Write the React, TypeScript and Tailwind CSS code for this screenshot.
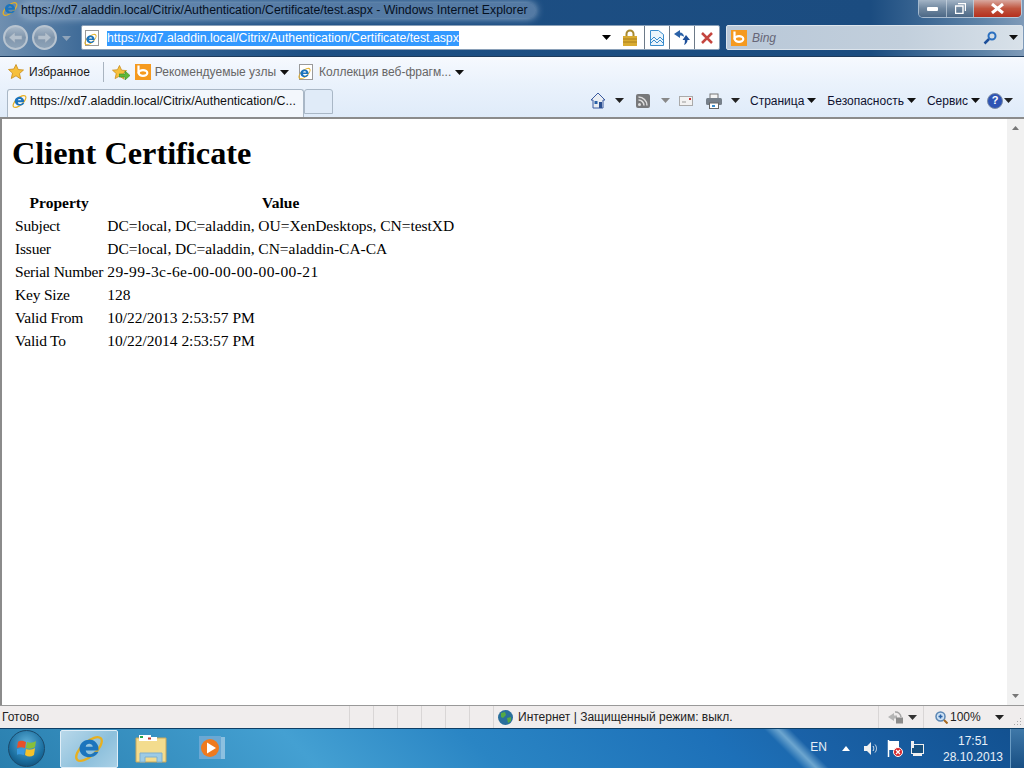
import React from "react";

const rows = [
  ["Subject", "DC=local, DC=aladdin, OU=XenDesktops, CN=testXD"],
  ["Issuer", "DC=local, DC=aladdin, CN=aladdin-CA-CA"],
  ["Serial Number", "29-99-3c-6e-00-00-00-00-00-21"],
  ["Key Size", "128"],
  ["Valid From", "10/22/2013 2:53:57 PM"],
  ["Valid To", "10/22/2014 2:53:57 PM"],
];

// small black dropdown triangle
const Caret = ({ className = "" }: { className?: string }) => (
  <svg width="9" height="5" viewBox="0 0 9 5" className={`shrink-0 ${className}`}>
    <path d="M0 0h9L4.5 5z" fill="currentColor" />
  </svg>
);

const IeLogo = ({ size = 16 }: { size?: number }) => (
  <svg width={size} height={size} viewBox="0 0 32 32" className="shrink-0">
    <ellipse cx="16" cy="16" rx="17" ry="7.500" transform="rotate(-42 16 16)" fill="none" stroke="#e8b020" strokeWidth="2.500" />
    <path d="M16 6a10 10 0 0 1 10 11.500H12.500c.3 4.500 6.500 5.500 9.500 1.500h4c-3 8-18 8-20-2C5 11 10 6 16 6zM12.500 13.500h7.500c-.5-4-7-4-7.500 0z" fill="#1c74bd" fillRule="evenodd" />
  </svg>
);

const PageIe = () => (
  <span className="relative flex h-[16px] w-[14px] shrink-0 border border-[#9a9a9a] bg-white">
    <span className="absolute -left-[2px] top-[2px]">
      <IeLogo size={13} />
    </span>
  </span>
);

const BingIcon = ({ size = 16 }: { size?: number }) => (
  <svg width={size} height={size} viewBox="0 0 16 16" className="shrink-0">
    <rect width="16" height="16" fill="#f59a1f" />
    <path d="M3.500 1.500v8" stroke="#fff" strokeWidth="2.200" />
    <ellipse cx="8" cy="9" rx="4.300" ry="2.800" fill="none" stroke="#fff" strokeWidth="2.200" />
  </svg>
);

const Star = ({ size = 16 }: { size?: number }) => (
  <svg width={size} height={size} viewBox="0 0 16 16" className="shrink-0">
    <path d="M8 .5l2.200 5 5.300.500-4 3.600 1.200 5.400L8 11.800 3.300 14.500l1.200-5.400-4-3.600 5.300-.5z" fill="#f6c03c" stroke="#c88a18" strokeWidth=".8" />
  </svg>
);

const NavButton = ({ forward }: { forward?: boolean }) => (
  <div className="flex h-[25px] w-[25px] items-center justify-center rounded-full border-2 border-[#b8c4d0] bg-[linear-gradient(#a8b8c8,#7f95ac_50%,#8ea3b8)]">
    <svg width="15" height="13" viewBox="0 0 15 13" className={forward ? "rotate-180" : ""}>
      <path d="M7 1L1 6.500 7 12V8.500h7v-4H7z" fill="#b4c0cc" stroke="#8fa0b2" strokeWidth=".6" />
    </svg>
  </div>
);

const Cmd = ({ label }: { label: string }) => (
  <div className="flex items-center text-[#0f1230]">
    <span className="text-[12px] leading-none">{label}</span>
    <Caret className="ml-[3px] text-[#111]" />
  </div>
);

export default function App() {
  return (
    <div className="flex h-[768px] w-[1024px] flex-col overflow-hidden bg-white font-['Liberation_Sans',sans-serif] text-[12px]">
      {/* title bar and address row */}
      <div className="h-[56px] shrink-0 bg-[linear-gradient(90deg,#6f8fb0_0%,#3f6b98_8%,#1d4f84_30%,#1b4c80_85%,#5f84a8_96%,#7f9ab8_100%)]">
        <div className="flex h-[25px] items-start">
          <div className="ml-[2px] mt-[1px]">
            <IeLogo size={16} />
          </div>
          <span className="ml-[3px] mt-[3px] rounded-[8px] bg-[#a9bfd6]/40 pr-[8px] text-[12.27px] leading-[15px] text-[#05101f] shadow-[0_0_8px_#a9bfd6]">
            https://xd7.aladdin.local/Citrix/Authentication/Certificate/test.aspx - Windows Internet Explorer
          </span>
          <div className="ml-auto mr-[2px] flex h-[18px] overflow-hidden rounded-b-[5px] border border-t-0 border-[#d5dfe9]/70">
            <div className="flex w-[28px] items-center justify-center border-r border-[#d5dfe9]/60 bg-[linear-gradient(#a3b4c6,#6f879f_50%,#4c6886)]">
              <div className="h-[4px] w-[11px] rounded-[1px] bg-white" />
            </div>
            <div className="flex w-[27px] items-center justify-center border-r border-[#d5dfe9]/60 bg-[linear-gradient(#a3b4c6,#6f879f_50%,#4c6886)]">
              <svg width="11" height="11" viewBox="0 0 11 11">
                <path d="M3 .5h7.500V8M.5 3h7.500v7.500H.5z" fill="none" stroke="#fff" strokeWidth="1.400" />
              </svg>
            </div>
            <div className="flex w-[47px] items-center justify-center bg-[linear-gradient(#d9a9a0,#c0553f_50%,#b52f1d)]">
              <svg width="15" height="11" viewBox="0 0 15 11">
                <path d="M2 1l11 9M13 1L2 10" stroke="#fff" strokeWidth="3" />
              </svg>
            </div>
          </div>
        </div>
        <div className="flex h-[31px] items-start">
          <div className="ml-[3px] flex gap-[4px]">
            <NavButton />
            <NavButton forward />
          </div>
          <Caret className="ml-[5px] mt-[11px] text-[#8fa4ba]" />
          <div className="ml-[10px] flex h-[25px] w-[639px] items-stretch rounded-[2px] border border-[#8aa0b8] bg-white">
            <div className="ml-[3px] flex items-center">
              <PageIe />
            </div>
            <div className="ml-[8px] flex items-center">
              <span className="mt-[1px] bg-[#3399ff] text-[12.27px] leading-[15px] text-white">https://xd7.aladdin.local/Citrix/Authentication/Certificate/test.aspx</span>
            </div>
            <div className="ml-auto flex items-center">
              <Caret className="mr-[12px] text-black" />
              <svg width="14" height="17" viewBox="0 0 14 17" className="mr-[7px]">
                <path d="M3.500 8V5a3.500 3.500 0 0 1 7 0v3" fill="none" stroke="#a88a30" strokeWidth="2" />
                <rect y="7" width="14" height="10" fill="#d9ab32" />
                <path d="M0 10h14M0 13h14" stroke="#a87f1c" />
              </svg>
            </div>
            <div className="flex w-[25px] items-center justify-center border-l border-[#6d7a88]">
              <svg width="14" height="16" viewBox="0 0 14 16">
                <path d="M.5.5h8l5 4v11H.5z" fill="#eaf4fb" stroke="#3a8ccc" />
                <path d="M1 10l3-3 3 3 3-3 3 3M1 13l3-3 3 3 3-3 3 3" fill="none" stroke="#3a8ccc" />
              </svg>
            </div>
            <div className="flex w-[25px] items-center justify-center border-l border-[#6d7a88]">
              <svg width="16" height="15" viewBox="0 0 16 15">
                <path d="M6 0L0 4l6 4V5.500c2 0 3 .5 4 1.500 0-3-2-4.500-4-4.500z" fill="#2b62a8" />
                <path d="M12 5l4 5h-2.500c0 2.500-1.500 4-3.500 5 .8-1.500 1-3 .8-5H8.500z" fill="#1d4f9a" />
              </svg>
            </div>
            <div className="flex w-[25px] items-center justify-center border-l border-[#6d7a88]">
              <svg width="12" height="12" viewBox="0 0 12 12">
                <path d="M1 1l10 10M11 1L1 11" stroke="#c4453f" strokeWidth="2.500" />
              </svg>
            </div>
          </div>
          <div className="ml-[6px] flex h-[25px] w-[297px] items-center rounded-[2px] border border-[#dce4ec] bg-[linear-gradient(90deg,#b9c8d8,#c2cfdc_60%,#d8e1e9)]">
            <div className="ml-[4px]">
              <BingIcon />
            </div>
            <span className="ml-[5px] italic text-[#667]">Bing</span>
            <svg width="14" height="14" viewBox="0 0 14 14" className="ml-auto mr-[12px]">
              <circle cx="9" cy="5" r="3.500" fill="none" stroke="#2a6fc0" strokeWidth="2" />
              <path d="M6 8l-4.500 4.500" stroke="#1d4f9a" strokeWidth="2.500" />
            </svg>
            <Caret className="mr-[4px] text-[#111]" />
          </div>
        </div>
      </div>

      {/* favourites + tab rows */}
      <div className="h-[61px] shrink-0 border-t border-[#1d3a5c] bg-[linear-gradient(#f6f9fe,#eaf2fc_45%,#dfebf9)]">
        <div className="flex h-[30px] items-center pl-[8px]">
          <Star />
          <span className="ml-[5px] text-[#1a1a1a]">Избранное</span>
          <div className="ml-[13px] h-[20px] w-px bg-[#a9b4c0]" />
          <div className="relative ml-[8px]">
            <Star size={15} />
            <svg width="11" height="9" viewBox="0 0 11 9" className="absolute -right-[3px] bottom-0">
              <path d="M0 3h6V0l5 4.500L6 9V6H0z" fill="#5fb83a" stroke="#3d8a24" strokeWidth=".6" />
            </svg>
          </div>
          <div className="ml-[8px]">
            <BingIcon />
          </div>
          <span className="ml-[4px] text-[#666]">Рекомендуемые узлы</span>
          <Caret className="ml-[4px] text-[#111]" />
          <div className="ml-[10px]">
            <PageIe />
          </div>
          <span className="ml-[6px] text-[#666]">Коллекция веб-фрагм...</span>
          <Caret className="ml-[4px] text-[#111]" />
        </div>
        <div className="flex h-[30px] items-end pl-[7px]">
          <div className="flex h-[28px] w-[297px] items-center rounded-t-[3px] border border-b-0 border-[#a9b7c6] bg-[#f3f7fc] pb-[4px] pl-[4px]">
            <IeLogo size={15} />
            <span className="ml-[3px] text-[12.4px] leading-none text-[#111]">https://xd7.aladdin.local/Citrix/Authentication/C...</span>
          </div>
          <div className="mb-[3px] h-[25px] w-[29px] rounded-t-[3px] border border-[#a9b7c6] bg-[#e0ebf8]" />
          <div className="mb-[8px] ml-auto flex items-center text-[#0f1230]">
            <svg width="16" height="17" viewBox="0 0 16 17">
              <path d="M8 1L1 8h2v8h10V8h2z" fill="#e9edf2" stroke="#3a5aa0" />
              <rect x="4.500" y="9" width="3" height="3" fill="#2b62a8" />
              <rect x="9" y="10" width="3" height="6" fill="#2b4f90" />
            </svg>
            <Caret className="ml-[9px] text-[#222]" />
            <svg width="14" height="14" viewBox="0 0 14 14" className="ml-[12px]">
              <rect width="14" height="14" rx="2" fill="#77787a" />
              <circle cx="3.500" cy="10.500" r="1.500" fill="#ddd" />
              <path d="M2.500 6a5.500 5.500 0 0 1 5.500 5.500M2.500 3a8.500 8.500 0 0 1 8.500 8.500" fill="none" stroke="#ddd" strokeWidth="1.500" />
            </svg>
            <Caret className="ml-[11px] text-[#888]" />
            <svg width="14" height="10" viewBox="0 0 14 10" className="ml-[9px]">
              <rect x=".5" y=".5" width="13" height="9" fill="#f2f2f2" stroke="#aaa" />
              <rect x="10" y="2" width="2" height="2" fill="#c33" />
              <path d="M3 6h4" stroke="#999" />
            </svg>
            <svg width="16" height="16" viewBox="0 0 16 16" className="ml-[13px]">
              <rect x="4" y="1" width="8" height="5" fill="#f5f5f5" stroke="#777" />
              <rect y="5" width="16" height="7" rx="1.500" fill="#77808a" />
              <rect x="3.500" y="10" width="9" height="5.500" fill="#fff" stroke="#666" />
              <rect x="6" y="12" width="3" height="2" fill="#3a8ccc" />
            </svg>
            <Caret className="ml-[9px] text-[#222]" />
            <div className="ml-[10px] flex items-center gap-[11px]">
              <Cmd label="Страница" />
              <Cmd label="Безопасность" />
              <Cmd label="Сервис" />
            </div>
            <div className="ml-[7px] flex h-[16px] w-[16px] items-center justify-center rounded-full border border-[#7d8ea8] bg-[#2e54b4] text-[11px] font-bold leading-none text-white">
              ?
            </div>
            <Caret className="ml-[1px] mr-[11px] text-[#222]" />
          </div>
        </div>
      </div>

      {/* page */}
      <div className="flex min-h-0 flex-1 border-t-2 border-l-2 border-[#8b8b8b]">
        <div className="flex-1 pl-[10px] pt-[16px] font-['Liberation_Serif',serif] text-[15.5px] text-black">
          <h1 className="text-[32.3px] font-bold leading-[37px]">Client Certificate</h1>
          <table className="mt-[18px] border-separate border-spacing-[2px]">
            <thead>
              <tr>
                <th className="px-px py-[2px] text-center font-bold leading-[17px]">Property</th>
                <th className="px-px py-[2px] text-center font-bold leading-[17px]">Value</th>
              </tr>
            </thead>
            <tbody>
              {rows.map(([k, v]) => (
                <tr key={k}>
                  <td className="px-px py-[2px] leading-[17px] tracking-[-0.2px]">{k}</td>
                  <td className={k === "Serial Number" ? "px-px py-[2px] leading-[17px] tracking-[0.4px]" : "px-px py-[2px] leading-[17px] tracking-[-0.03px]"}>{v}</td>
                </tr>
              ))}
            </tbody>
          </table>
        </div>
        <div className="flex w-[17px] shrink-0 flex-col items-center justify-between bg-[#f1f1f1] py-[7px] text-[#777]">
          <svg width="7" height="4" viewBox="0 0 7 4"><path d="M0 4h7L3.500 0z" fill="currentColor" /></svg>
          <svg width="7" height="4" viewBox="0 0 7 4"><path d="M0 0h7L3.500 4z" fill="currentColor" /></svg>
        </div>
      </div>

      {/* status bar */}
      <div className="flex h-[23px] shrink-0 items-stretch border-t border-[#999] bg-[#f0eded] text-[#222]">
        <div className="flex w-[349px] items-center pl-[2px]">Готово</div>
        {[0, 1, 2, 3, 4, 5].map((i) => (
          <div key={i} className="w-[24px] border-l border-[#d9d6d6]" />
        ))}
        <div className="flex w-[385px] items-center border-l border-[#d9d6d6] pl-[4px]">
          <svg width="15" height="15" viewBox="0 0 15 15" className="shrink-0">
            <circle cx="7.500" cy="7.500" r="7.500" fill="#2a6f9c" />
            <path d="M3 3l4-1 1 3-3 3-2-1zM9 8l4-1 0 4-3 2z" fill="#55aa44" />
          </svg>
          <span className="ml-[5px]">Интернет | Защищенный режим: выкл.</span>
        </div>
        <div className="flex w-[45px] items-center border-l border-[#d9d6d6] pl-[8px]">
          <svg width="17" height="15" viewBox="0 0 17 15" className="shrink-0">
            <path d="M1 7l6-4v2.500h3v3H7V11z" fill="#b5b5b5" />
            <path d="M8 2a5.500 5.500 0 0 1 6 5" fill="none" stroke="#a5a5a5" strokeWidth="1.500" />
            <rect x="9" y="7.500" width="7" height="6" fill="#8a8a8a" />
          </svg>
          <Caret className="ml-[4px] text-[#333]" />
        </div>
        <div className="flex flex-1 items-center border-l border-[#d9d6d6] pl-[11px]">
          <svg width="13" height="13" viewBox="0 0 13 13" className="shrink-0">
            <circle cx="5.500" cy="5.500" r="4.500" fill="#cfe3f5" stroke="#5a86b4" strokeWidth="1.500" />
            <path d="M3.500 5.500h4M5.500 3.500v4" stroke="#2b62a8" strokeWidth="1.500" />
            <path d="M9 9l3.500 3.500" stroke="#a86a20" strokeWidth="2" />
          </svg>
          <span className="ml-[2px]">100%</span>
          <Caret className="ml-[14px] text-[#222]" />
          <svg width="8" height="8" viewBox="0 0 8 8" className="ml-auto mr-[2px] mt-[10px] text-[#aaa]">
            <path d="M6 0h1v1H6zM3 3h1v1H3zM6 3h1v1H6zM0 6h1v1H0zM3 6h1v1H3zM6 6h1v1H6z" fill="currentColor" />
          </svg>
        </div>
      </div>

      {/* taskbar */}
      <div className="flex h-[40px] shrink-0 items-center border-t border-[#0e3f66] bg-[linear-gradient(45deg,#2a7fae_0%,#44a0d2_30%,#2a85c4_47%,#1d70b8_70%,#1c6ab0_75.5%,#6da6cf_76.8%,#1a62a8_78%,#12508f_100%)] text-white">
        <div className="ml-[8px] flex h-[37px] w-[37px] items-center justify-center rounded-full border border-[#1b4a6b] bg-[radial-gradient(circle_at_50%_35%,#5fb0d8,#1b6fa0_60%,#0b3f66)]">
          <svg width="20" height="19" viewBox="0 0 20 19">
            <path d="M1 3c3-2 5-1 8 0l-1 6C5 8 3 8 0 9z" fill="#e8502a" />
            <path d="M10 3c3 1 6 1 9-1l-1 6c-3 2-6 2-9 1z" fill="#86bf3a" />
            <path d="M0 10c3-1 5-1 8 0l-1 6c-3-1-5-1-8 0z" fill="#3a9ae0" />
            <path d="M9 10c3 1 6 1 9-1l-1 7c-3 2-6 2-9 0z" fill="#f6c22a" />
          </svg>
        </div>
        <div className="ml-[15px] flex h-[38px] w-[58px] items-center justify-center rounded-[2px] border border-[#dfeef8] bg-[linear-gradient(135deg,#b8d8ea,#8dc0dc_60%,#a9d0e6)]">
          <IeLogo size={30} />
        </div>
        <div className="ml-[17px]">
          <svg width="32" height="29" viewBox="0 0 32 29">
            <path d="M1 4h30v24H1z" fill="#f3dc8e" stroke="#c9a85a" />
            <rect x="4" y="1" width="12" height="6" fill="#fff" />
            <rect x="5" y="2" width="3" height="2" fill="#27a64a" />
            <rect x="12" y="3" width="10" height="4" fill="#fff" />
            <rect x="13" y="3.500" width="3" height="2" fill="#c0392b" />
            <path d="M5 19h22v9h-5v-5H10v5H5z" fill="#9ccbe6" stroke="#7fb0cf" />
          </svg>
        </div>
        <div className="ml-[32px]">
          <svg width="26" height="25" viewBox="0 0 26 25">
            <rect x="3" y="1" width="23" height="22" fill="#8cc0e0" />
            <rect y="0" width="22" height="23" fill="#6aa8d4" />
            <circle cx="11" cy="12" r="9" fill="#ee7a1f" />
            <path d="M8 6.500v11L17 12z" fill="#fff" />
          </svg>
        </div>
        <span className="mb-[4px] ml-auto text-[12px] text-[#e6eef6]">EN</span>
        <svg width="8" height="5" viewBox="0 0 8 5" className="ml-[15px]"><path d="M0 5h8L4 0z" fill="#fff" /></svg>
        <svg width="15" height="15" viewBox="0 0 15 15" className="ml-[13px]">
          <path d="M1 5h3l4-4v13l-4-4H1z" fill="#f0f0f0" />
          <path d="M10 5c1 1.500 1 3.500 0 5M12 3.500c2 2.500 2 5.500 0 8" fill="none" stroke="#dfe8f0" />
        </svg>
        <svg width="16" height="17" viewBox="0 0 16 17" className="ml-[9px]">
          <path d="M1.500 0v17" stroke="#fff" strokeWidth="1.500" />
          <path d="M2 1h10v9H2z" fill="#fff" />
          <circle cx="11" cy="12" r="4.500" fill="#d8262a" stroke="#fff" />
          <path d="M9 10l4 4M13 10l-4 4" stroke="#fff" strokeWidth="1.300" />
        </svg>
        <svg width="15" height="16" viewBox="0 0 15 16" className="ml-[6px]">
          <rect x="2.500" y="3.500" width="12" height="9" fill="#17507f" stroke="#f0f0f0" />
          <rect x="2" y="0" width="3" height="7" fill="#f0f0f0" />
          <path d="M4 14h9" stroke="#f0f0f0" strokeWidth="2" />
        </svg>
        <div className="ml-[16px] flex w-[66px] flex-col items-center text-[12px] leading-[16px] text-[#e8f0f8]">
          <span>17:51</span>
          <span>28.10.2013</span>
        </div>
        <div className="ml-[4px] h-full w-[14px] border-l border-[#6a9cc4] bg-[linear-gradient(#3f78a8,#184f84)]" />
      </div>
    </div>
  );
}
